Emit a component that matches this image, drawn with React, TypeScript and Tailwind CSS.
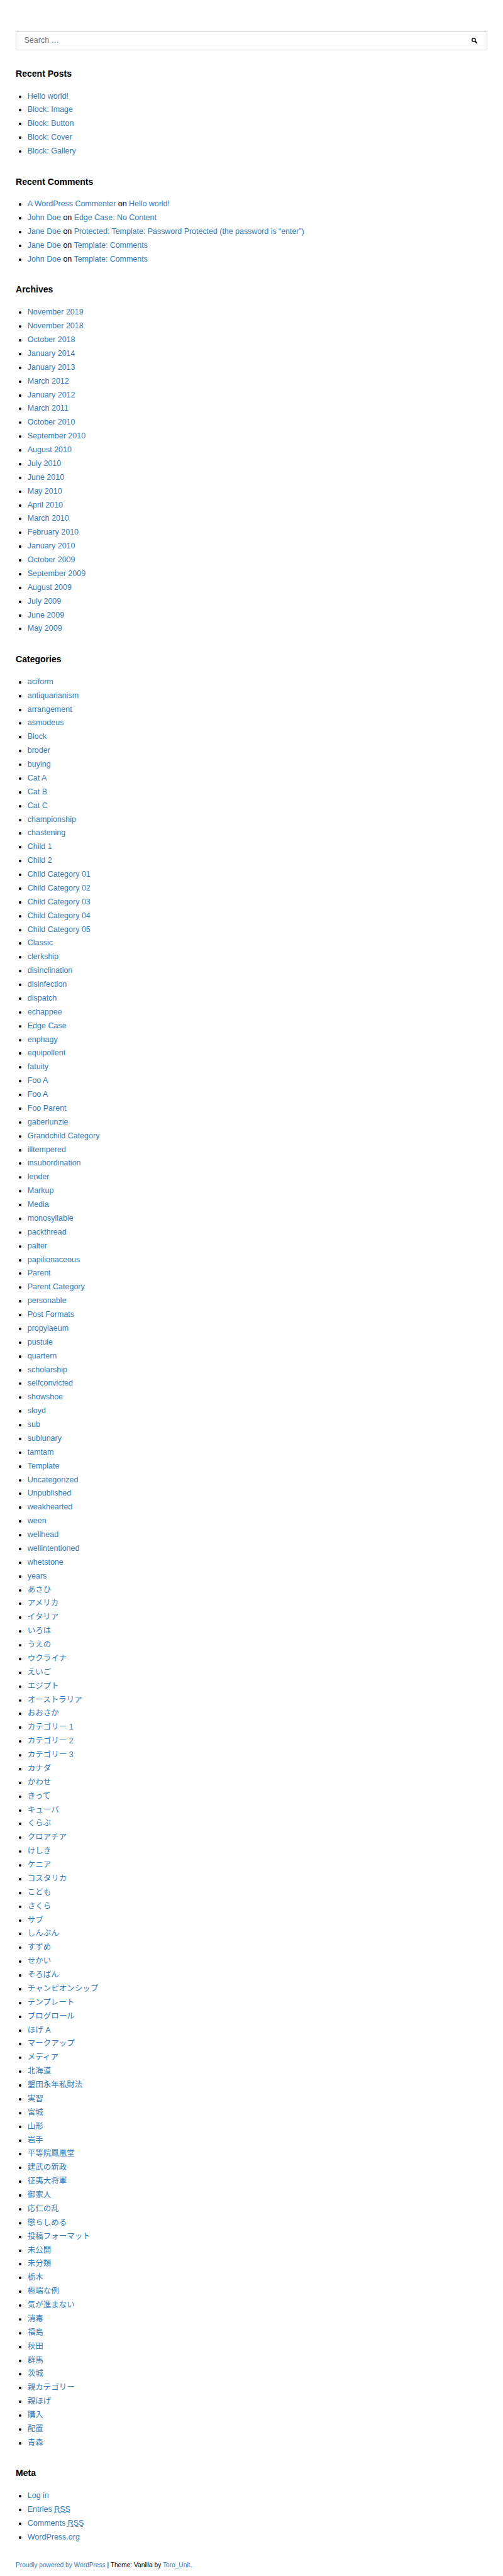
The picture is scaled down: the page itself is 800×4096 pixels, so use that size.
import type { ReactNode } from "react";

const posts = ["Hello world!", "Block: Image", "Block: Button", "Block: Cover", "Block: Gallery"];

const comments: [string, string][] = [
  ["A WordPress Commenter", "Hello world!"],
  ["John Doe", "Edge Case: No Content"],
  ["Jane Doe", "Protected: Template: Password Protected (the password is “enter”)"],
  ["Jane Doe", "Template: Comments"],
  ["John Doe", "Template: Comments"],
];

const archives = [
  "November 2019", "November 2018", "October 2018", "January 2014", "January 2013", "March 2012",
  "January 2012", "March 2011", "October 2010", "September 2010", "August 2010", "July 2010",
  "June 2010", "May 2010", "April 2010", "March 2010", "February 2010", "January 2010",
  "October 2009", "September 2009", "August 2009", "July 2009", "June 2009", "May 2009",
];

const categories = [
  "aciform", "antiquarianism", "arrangement", "asmodeus", "Block", "broder", "buying", "Cat A",
  "Cat B", "Cat C", "championship", "chastening", "Child 1", "Child 2", "Child Category 01",
  "Child Category 02", "Child Category 03", "Child Category 04", "Child Category 05", "Classic",
  "clerkship", "disinclination", "disinfection", "dispatch", "echappee", "Edge Case", "enphagy",
  "equipollent", "fatuity", "Foo A", "Foo A", "Foo Parent", "gaberlunzie", "Grandchild Category",
  "illtempered", "insubordination", "lender", "Markup", "Media", "monosyllable", "packthread",
  "palter", "papilionaceous", "Parent", "Parent Category", "personable", "Post Formats",
  "propylaeum", "pustule", "quartern", "scholarship", "selfconvicted", "showshoe", "sloyd", "sub",
  "sublunary", "tamtam", "Template", "Uncategorized", "Unpublished", "weakhearted", "ween",
  "wellhead", "wellintentioned", "whetstone", "years",
  "あさひ", "アメリカ", "イタリア", "いろは", "うえの", "ウクライナ", "えいご", "エジプト",
  "オーストラリア", "おおさか", "カテゴリー 1", "カテゴリー 2", "カテゴリー 3", "カナダ", "かわせ",
  "きって", "キューバ", "くらぶ", "クロアチア", "けしき", "ケニア", "コスタリカ", "こども", "さくら",
  "サブ", "しんぶん", "すずめ", "せかい", "そろばん", "チャンピオンシップ", "テンプレート",
  "ブログロール", "ほげ A", "マークアップ", "メディア", "北海道", "墾田永年私財法", "実習", "宮城",
  "山形", "岩手", "平等院鳳凰堂", "建武の新政", "征夷大将軍", "御家人", "応仁の乱", "懲らしめる",
  "投稿フォーマット", "未公開", "未分類", "栃木", "極端な例", "気が進まない", "消毒", "福島", "秋田",
  "群馬", "茨城", "親カテゴリー", "親ほげ", "購入", "配置", "青森",
];

function Link({ children }: { children: ReactNode }) {
  return <a href="#" className="text-[#337ab7]">{children}</a>;
}

function Widget({ title, items }: { title: string; items: ReactNode[] }) {
  return (
    <section>
      <h2 className="h-[62.5px] pt-[25px] text-[14.0625px] leading-[24.6px] font-bold">{title}</h2>
      <ul className="list-disc pl-[18.75px] leading-[21.875px]">
        {items.map((item, i) => (
          <li key={i} className="h-[21.875px] pt-[0.4px]">{item}</li>
        ))}
      </ul>
    </section>
  );
}

function Rss() {
  return <abbr className="underline decoration-dotted">RSS</abbr>;
}

export default function App() {
  return (
    <div
      lang="en"
      className="h-[4096px] w-full overflow-hidden bg-white px-[25px] pt-[50px] font-['Liberation_Sans','Noto_Sans_CJK_JP',sans-serif] text-[12.5px] text-black"
    >
      <form className="flex h-[29.6875px] items-center border border-[#d3d3d3] pr-[14.5px] pl-[12.5px]">
        <input
          type="text"
          placeholder="Search …"
          className="min-w-0 flex-1 bg-transparent outline-none placeholder:text-[#757575]"
        />
        <svg viewBox="0 0 12 12" className="h-[9.4px] w-[9.4px]" fill="none" stroke="#000">
          <circle cx="4.4" cy="4.4" r="3.4" strokeWidth="1.7" />
          <path d="M7 7l1 1" strokeWidth="1.6" />
          <path d="M8 8l2.6 2.6" strokeWidth="2.4" strokeLinecap="round" />
        </svg>
      </form>

      <Widget title="Recent Posts" items={posts.map((t) => <Link>{t}</Link>)} />
      <Widget
        title="Recent Comments"
        items={comments.map(([who, post]) => (
          <span className="tracking-[-0.04px]">
            <Link>{who}</Link> on <Link>{post}</Link>
          </span>
        ))}
      />
      <Widget title="Archives" items={archives.map((t) => <Link>{t}</Link>)} />
      <Widget title="Categories" items={categories.map((t) => <Link>{t}</Link>)} />
      <Widget
        title="Meta"
        items={[
          <Link>Log in</Link>,
          <Link>Entries <Rss /></Link>,
          <Link>Comments <Rss /></Link>,
          <Link>WordPress.org</Link>,
        ]}
      />

      <footer className="pt-[25px] text-[10.16px] leading-[17.5px]">
        <Link>Proudly powered by WordPress</Link> | Theme: Vanilla by <Link>Toro_Unit</Link>.
      </footer>
    </div>
  );
}
